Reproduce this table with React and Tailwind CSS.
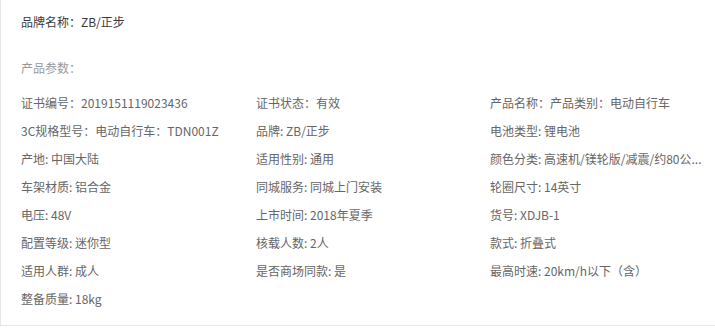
import React from "react";

const params = [
  "证书编号：2019151119023436",
  "证书状态：有效",
  "产品名称：产品类别：电动自行车",
  "3C规格型号：电动自行车：TDN001Z",
  "品牌: ZB/正步",
  "电池类型: 锂电池",
  "产地: 中国大陆",
  "适用性别: 通用",
  "颜色分类: 高速机/镁轮版/减震/约80公...",
  "车架材质: 铝合金",
  "同城服务: 同城上门安装",
  "轮圈尺寸: 14英寸",
  "电压: 48V",
  "上市时间: 2018年夏季",
  "货号: XDJB-1",
  "配置等级: 迷你型",
  "核载人数: 2人",
  "款式: 折叠式",
  "适用人群: 成人",
  "是否商场同款: 是",
  "最高时速: 20km/h以下（含）",
  "整备质量: 18kg",
];

export default function App() {
  return (
    <div className="w-[715px] h-[334px] bg-white font-['Noto_Sans_CJK_SC',sans-serif] text-[12px]">
      <div className="border-l border-b border-[#e6e6e6] pl-5 pt-2 pb-3">
        {/* Brand */}
        <div className="h-7 leading-7 text-[#3a3a3a]">品牌名称：ZB/正步</div>

        {/* Params title */}
        <div className="mt-[18px] h-7 leading-7 text-[#999]">产品参数：</div>

        {/* Params grid */}
        <ul className="mt-[7px] grid grid-cols-[235px_234px_225px] text-[#666]">
          {params.map((p, i) => (
            <li key={i} className="h-7 leading-7 whitespace-nowrap">
              {p}
            </li>
          ))}
        </ul>
      </div>
    </div>
  );
}
